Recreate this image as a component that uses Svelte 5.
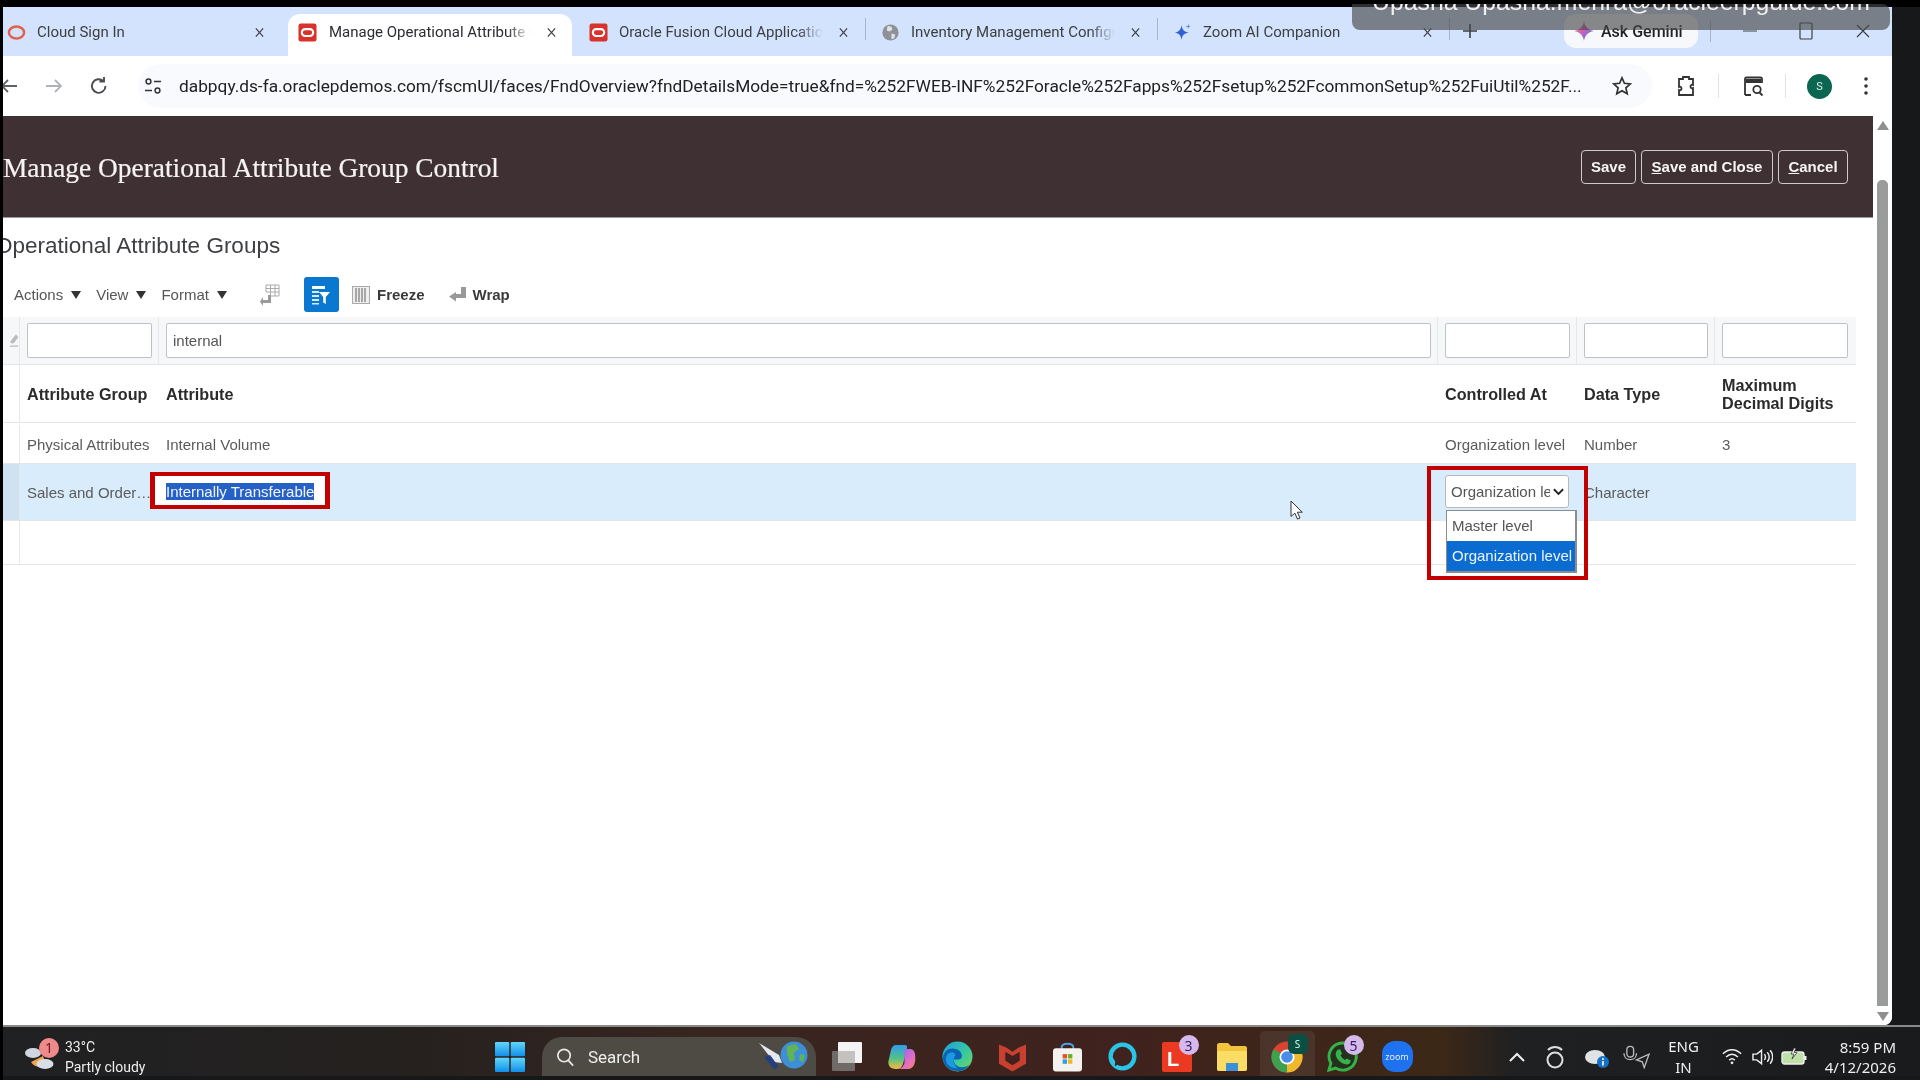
<script>
	const url = 'dabpqy.ds-fa.oraclepdemos.com/fscmUI/faces/FndOverview?fndDetailsMode=true&fnd=%252FWEB-INF%252Foracle%252Fapps%252Fsetup%252FcommonSetup%252FuiUtil%252F...';

	const tabs = [
		{ title: 'Cloud Sign In', icon: 'ring' },
		{ title: 'Manage Operational Attribute Group Control', icon: 'oracle', active: true },
		{ title: 'Oracle Fusion Cloud Applications', icon: 'oracle', sep: true },
		{ title: 'Inventory Management Configuration', icon: 'globe', sep: true },
		{ title: 'Zoom AI Companion', icon: 'spark', sep: true }
	];

	const menus = ['Actions', 'View', 'Format'];
	const filters = ['', 'internal', '', '', ''];
</script>

<div class="screen">
	<div class="top-strip"></div>

	<div class="window">
		<header class="tabbar">
			<div class="tabs">
				{#each tabs as tab}
					<div class="tab" class:active={tab.active} class:sep={tab.sep}>
						{#if tab.icon === 'ring'}
							<svg class="fav" viewBox="0 0 20 20"><ellipse cx="10" cy="10" rx="8" ry="6.4" fill="none" stroke="#e2604f" stroke-width="2.6" /></svg>
						{:else if tab.icon === 'oracle'}
							<svg class="fav" viewBox="0 0 20 20"><rect x="0.5" y="0.5" width="19" height="19" rx="2.5" fill="#d8322a" /><rect x="4" y="6.4" width="12" height="7.2" rx="3.6" fill="none" stroke="#fff" stroke-width="2.2" /></svg>
						{:else if tab.icon === 'globe'}
							<svg class="fav" viewBox="0 0 20 20"><circle cx="10" cy="10" r="8.5" fill="#8d9198" /><path d="M7 3l4 1 1 3-3 2-3-1zM11 11l4 1-1 4-3 1z" fill="#dfe3e8" /></svg>
						{:else}
							<svg class="fav" viewBox="0 0 20 20"><path d="M9 2c.7 5 2.500 7 7.500 8-5 1-6.800 3-7.500 8-.7-5-2.500-7-7-8 4.500-1 6.300-3 7-8z" fill="#2f62d8" /><path d="M16 1l.6 2 1.900.6-1.900.6L16 6l-.6-1.800-1.900-.6 1.900-.6z" fill="#4f86ee" /></svg>
						{/if}
						<span class="tab-title">{tab.title}</span>
						<svg class="tab-close" viewBox="0 0 12 12"><path d="M2 1.500l8 9M10 1.500l-8 9" stroke="#3c4043" stroke-width="1.300" fill="none" /></svg>
					</div>
				{/each}
			</div>
			<svg class="plus" viewBox="0 0 14 14"><path d="M7 0v14M0 7h14" stroke="#3c4043" stroke-width="1.600" /></svg>
			<div class="gemini">
				<svg viewBox="0 0 20 20" width="22" height="22"><defs><linearGradient id="gem" x1="0" y1="0" x2="1" y2="1"><stop offset="0" stop-color="#f0a030" /><stop offset=".45" stop-color="#d060b8" /><stop offset="1" stop-color="#2f7cf0" /></linearGradient></defs><path d="M10 1c.8 5 3.500 8 9 9-5.500 1-8.200 4-9 9-.8-5-3.500-8-9-9 5.500-1 8.200-4 9-9z" fill="url(#gem)" /></svg>
				Ask Gemini
			</div>
			<i class="win-sep"></i>
			<svg class="win-btn min" viewBox="0 0 14 14"><path d="M0 7h14" stroke="#3c4043" stroke-width="1.200" /></svg>
			<svg class="win-btn max" viewBox="0 0 14 18"><rect x="1" y="1" width="12" height="16" rx="1" fill="none" stroke="#3c4043" stroke-width="1.200" /></svg>
			<svg class="win-btn cls" viewBox="0 0 14 14"><path d="M1 1l12 12M13 1L1 13" stroke="#3c4043" stroke-width="1.200" fill="none" /></svg>
		</header>

		<nav class="toolbar">
			<svg class="tool back" viewBox="0 0 24 24"><path d="M20 12H5M11 6l-6 6 6 6" stroke="#5f6368" stroke-width="1.800" fill="none" /></svg>
			<svg class="tool forward" viewBox="0 0 24 24"><path d="M4 12h15M13 6l6 6-6 6" stroke="#b0b4b9" stroke-width="1.800" fill="none" /></svg>
			<svg class="tool reload" viewBox="0 0 24 24"><path d="M18.500 12a6.800 6.800 0 1 1-2.200-5M17 3v4.500h-4.500" stroke="#4a4d52" stroke-width="1.900" fill="none" /></svg>
			<div class="omnibox">
				<svg class="tune" viewBox="0 0 18 18"><circle cx="4.500" cy="4.500" r="2.400" fill="none" stroke="#333" stroke-width="1.500" /><path d="M10 4.500h7M1 13.500h7" stroke="#333" stroke-width="1.700" /><circle cx="13.500" cy="13.500" r="2.400" fill="none" stroke="#333" stroke-width="1.500" /></svg>
				<span class="url">{url}</span>
				<svg class="star" viewBox="0 0 20 20"><path d="M10 1.800l2.400 5.500 6 .6-4.500 4 1.300 5.900L10 14.700l-5.200 3.100 1.300-5.900-4.500-4 6-.6z" fill="none" stroke="#333" stroke-width="1.700" /></svg>
			</div>
			<svg class="tool ext" viewBox="0 0 24 24"><path d="M5 5h4V3h6v2h4v6c-1.500-.6-2.500 0-2.500 1.500S17.500 14.600 19 14v7H5v-5c1.500.6 2.500 0 2.500-1.500S6.500 12.400 5 13z" fill="none" stroke="#333" stroke-width="1.800" /></svg>
			<i class="tool-sep first"></i>
			<svg class="tool search" viewBox="0 0 24 24"><path d="M4 21V5c0-1 .6-1.500 1.500-1.500h14c.9 0 1.500.5 1.500 1.500v4M4 21h6" fill="none" stroke="#333" stroke-width="1.800" /><rect x="5" y="5" width="15" height="4" fill="#333" /><circle cx="16" cy="15.500" r="3.700" fill="none" stroke="#333" stroke-width="1.800" /><path d="M18.500 18.500l3 3" stroke="#333" stroke-width="1.800" /></svg>
			<i class="tool-sep"></i>
			<span class="avatar">S</span>
			<svg class="kebab" viewBox="0 0 6 20"><circle cx="3" cy="3" r="1.800" fill="#333" /><circle cx="3" cy="10" r="1.800" fill="#333" /><circle cx="3" cy="17" r="1.800" fill="#333" /></svg>
		</nav>

		<div class="page">
			<main class="main">
				<section class="title-bar">
					<h1>Manage Operational Attribute Group Control</h1>
					<div class="actions">
						<button type="button">Save</button>
						<button type="button"><u>S</u>ave and Close</button>
						<button type="button"><u>C</u>ancel</button>
					</div>
				</section>

				<h2>Operational Attribute Groups</h2>

				<div class="table-tools">
					{#each menus as menu}
						<span class="menu">{menu}<i class="caret"></i></span>
					{/each}
					<svg class="detach" viewBox="0 0 20 22"><path d="M6 1h13v11H11" fill="#fff" stroke="#aaa" stroke-width="1" /><path d="M6 1v7M10.500 1v11M15 1v11M6 4.500h13M6 8h13" stroke="#aaa" stroke-width="1" fill="none" /><path d="M8 11v5H3v-3l-3 4.500L3 22v-3h8v-8z" fill="#9a9a9a" /></svg>
					<span class="qbe">
						<svg viewBox="0 0 20 20" width="20" height="20"><rect x="1" y="1" width="13" height="3" fill="#fff" /><path d="M1 6h7v2H1zM1 10h7v2H1zM1 14h7v2H1zM1 18h7v1.500H1z" fill="#d5e9f8" /><path d="M8 7h11l-4.200 5v7l-2.600-1.500V12z" fill="#fff" /></svg>
					</span>
					<svg class="freeze" viewBox="0 0 18 18"><rect x="0.500" y="0.500" width="17" height="17" fill="#eee" stroke="#aaa" /><path d="M4 2v14M7 2v14M10 2v14M13 2v14" stroke="#777" stroke-width="1.200" /></svg>
					<span class="tool-label">Freeze</span>
					<svg class="wrap" viewBox="0 0 17 16"><path d="M12 0h5v11H7v3.500L0 9.500 7 5v2h5z" fill="#999" /></svg>
					<span class="tool-label">Wrap</span>
				</div>

				<div class="table">
					<div class="row filter-row">
						<div class="cell lead">
							<svg viewBox="0 0 12 18" width="11" height="16"><path d="M8 0l3 4-6 8H1l-.5-2.500z" fill="#bbb" /><path d="M0 15h11v1.500H0z" fill="#bbb" /></svg>
						</div>
						{#each filters as value}
							<div class="cell"><input type="text" {value} readonly /></div>
						{/each}
					</div>

					<div class="row head-row">
						<div class="cell lead"></div>
						<div class="cell">Attribute Group</div>
						<div class="cell">Attribute</div>
						<div class="cell">Controlled At</div>
						<div class="cell">Data Type</div>
						<div class="cell">Maximum<br />Decimal Digits</div>
					</div>

					<div class="row data-row plain">
						<div class="cell lead"></div>
						<div class="cell">Physical Attributes</div>
						<div class="cell">Internal Volume</div>
						<div class="cell">Organization level</div>
						<div class="cell">Number</div>
						<div class="cell">3</div>
					</div>

					<div class="row data-row selected">
						<div class="cell lead"></div>
						<div class="cell">Sales and Order…</div>
						<div class="cell"><span class="mark"><span class="picked">Internally Transferable</span></span></div>
						<div class="cell control">
							<div class="select">
								<span class="select-value">Organization level</span>
								<svg viewBox="0 0 12 8" width="11" height="8"><path d="M1 1l5 5 5-5" fill="none" stroke="#222" stroke-width="2" /></svg>
							</div>
							<div class="listbox">
								<div class="option">Master level</div>
								<div class="option on">Organization level</div>
							</div>
							<div class="callout"></div>
						</div>
						<div class="cell">Character</div>
						<div class="cell"></div>
					</div>

					<div class="row empty-row">
						<div class="cell lead"></div>
					</div>
				</div>

				<svg class="pointer" viewBox="0 0 14 20" width="14" height="20"><path d="M1 1v15.500l3.800-3.400 2.700 6 2.500-1.100-2.700-5.800h5z" fill="#fff" stroke="#333" stroke-width="1" /></svg>
			</main>

			<aside class="scrollbar">
				<i class="arrow up"></i>
				<i class="thumb"></i>
				<i class="arrow down"></i>
			</aside>
		</div>
	</div>

	<div class="share-pill"><span>Upasna Upasna.mehra@oracleerpguide.com</span></div>

	<footer class="taskbar">
		<div class="weather">
			<div class="weather-icon">
				<svg viewBox="0 0 31 28" width="31" height="28"><ellipse cx="8" cy="10" rx="8" ry="5" fill="#cfd6df" /><path d="M6 19c4 6 11 6 15 2l-3-8z" fill="#f0a54a" /><ellipse cx="20" cy="21" rx="8.500" ry="5" fill="#d7dee6" /></svg>
				<b class="count red">1</b>
			</div>
			<div class="weather-text">
				<span>33°C</span>
				<span>Partly cloudy</span>
			</div>
		</div>

		<svg class="start" viewBox="0 0 30 30" width="30" height="30">
			<defs><linearGradient id="win" x1="0" y1="0" x2="0" y2="1"><stop offset="0" stop-color="#62d6fb" /><stop offset="1" stop-color="#0f8fe8" /></linearGradient></defs>
			<rect x="0" y="0" width="14.300" height="14.300" rx="1" fill="url(#win)" />
			<rect x="15.700" y="0" width="14.300" height="14.300" rx="1" fill="url(#win)" />
			<rect x="0" y="15.700" width="14.300" height="14.300" rx="1" fill="url(#win)" />
			<rect x="15.700" y="15.700" width="14.300" height="14.300" rx="1" fill="url(#win)" />
		</svg>

		<div class="searchbox">
			<svg viewBox="0 0 20 20" width="19" height="20"><circle cx="8.500" cy="8.500" r="6.500" fill="none" stroke="#e8e8e8" stroke-width="1.800" /><path d="M13 13.500l5 5.500" stroke="#e8e8e8" stroke-width="1.800" /></svg>
			<span>Search</span>
			<svg class="rocket" viewBox="0 0 50 38" width="50" height="38">
				<path d="M1 5l20 12 3 8-8-1z" fill="#e3e7ee" />
				<path d="M6 19l10 12 5-2-9-12z" fill="#24407c" />
				<circle cx="36" cy="17" r="13.500" fill="#3d8fd8" />
				<path d="M29 8l9-2 3 5-5 4 1 7-5 2-3-8zM42 16l5 1-2 7-4-2z" fill="#62b354" />
			</svg>
		</div>

		<div class="apps">
			<span class="app">
				<svg viewBox="0 0 30 30" width="30" height="30"><rect x="0" y="9" width="23" height="20" rx="1" fill="#6f6b69" /><rect x="6" y="0" width="24" height="21" rx="1" fill="#f4f4f4" /><rect x="6" y="9" width="17" height="12" fill="#c4c2c0" /></svg>
			</span>
			<span class="app">
				<svg viewBox="0 0 30 30" width="30" height="30">
					<defs>
						<linearGradient id="copa" x1="0" y1="0" x2="0" y2="1"><stop offset="0" stop-color="#2f9df0" /><stop offset=".55" stop-color="#53c08a" /><stop offset="1" stop-color="#f6bb3a" /></linearGradient>
						<linearGradient id="copb" x1="0" y1="0" x2="1" y2="1"><stop offset="0" stop-color="#7c6cf0" /><stop offset=".6" stop-color="#e46cc8" /><stop offset="1" stop-color="#f58a5a" /></linearGradient>
					</defs>
					<path d="M9 3h9c2 0 2.500 2 1.800 4L16 22c-1 3-3 5-6 5-1 0-2.500 0-4-.5C3 26 .8 23 1.500 19L4 8c.6-3 2.500-5 5-5z" fill="url(#copa)" />
					<path d="M17 7h6c3 0 4.500 2 5 5 .5 4 .5 8-1 11-1 2-3 4-6 4h-9c3-1 4.500-3 5.500-6z" fill="url(#copb)" />
				</svg>
			</span>
			<span class="app">
				<svg viewBox="0 0 32 32" width="31" height="31"><defs><linearGradient id="edge" x1="0" y1="0" x2="1" y2="1"><stop offset="0" stop-color="#1e9fe0" /><stop offset=".55" stop-color="#36c8a0" /><stop offset="1" stop-color="#7ad65a" /></linearGradient></defs><circle cx="16" cy="16" r="15.500" fill="url(#edge)" /><path d="M1 17C2 9 9 6 15 8.500c5 2 6.500 6.500 5 9-1.500 2-6 2-8 1-.5 4 3 8 8 8.500 3 .3 6-.6 8-2.500-3 5-8 7-13 6.500C7 30 .5 24 1 17z" fill="#0c62b4" /><path d="M4 19c0-5 4-8.500 8-7 2.500 1 2 3 .5 5-1.500 2.500-.5 8 4 11-6 .5-12.500-3-12.500-9z" fill="#1b9ae0" /></svg>
			</span>
			<span class="app">
				<svg viewBox="0 0 28 30" width="27" height="30"><path d="M0 2l8 3.500 6 4 6-4L28 2v20l-14 8L0 22z" fill="#c8402f" /><path d="M6.500 9.500L14 14l7.500-4.500V19L14 23.500 6.500 19z" fill="#43201d" /></svg>
			</span>
			<span class="app">
				<svg viewBox="0 0 30 30" width="29" height="30"><path d="M9 8V5c0-5 12-5 12 0v3" fill="none" stroke="#4aa0e0" stroke-width="2" /><rect x="0" y="6" width="30" height="24" rx="3" fill="#f4f2ee" /><rect x="10" y="12" width="4.500" height="4.500" fill="#e2502c" /><rect x="15.500" y="12" width="4.500" height="4.500" fill="#6aae2c" /><rect x="10" y="17.500" width="4.500" height="4.500" fill="#2a9ee0" /><rect x="15.500" y="17.500" width="4.500" height="4.500" fill="#f0b820" /></svg>
			</span>
			<span class="app">
				<svg viewBox="0 0 32 32" width="31" height="31"><path d="M16 1.500a14.500 14.500 0 1 0 0 29 14.500 14.500 0 0 0 0-29zm0 4.500a10 10 0 0 1 0 20c-2 0-3.500-.5-5-1.500L8 26l.5-5c-1-1.500-2.500-3-2.500-5a10 10 0 0 1 10-10z" fill="#29c4e6" fill-rule="evenodd" /></svg>
			</span>
			<span class="app">
				<span class="l-tile">L</span>
				<b class="count lilac">3</b>
			</span>
			<span class="app">
				<svg viewBox="0 0 30 28" width="30" height="28"><path d="M0 2c0-1 1-2 2-2h9l3 3h14c1 0 2 1 2 2v21c0 1-1 2-2 2H2c-1 0-2-1-2-2z" fill="#f1c43c" /><path d="M0 8h30v18c0 1-1 2-2 2H2c-1 0-2-1-2-2z" fill="#fbdc65" /><rect x="9" y="20" width="12" height="8" fill="#3d8fd8" /></svg>
			</span>
			<span class="app current">
				<svg viewBox="0 0 32 32" width="32" height="32"><circle cx="16" cy="16" r="15.500" fill="#d9432f" /><path d="M16 16L29.400 8.200A15.500 15.500 0 0 1 16 31.500z" fill="#f0b92c" /><path d="M16 16L16 31.500A15.500 15.500 0 0 1 2.600 8.200z" fill="#3da14f" /><circle cx="16" cy="16" r="7.500" fill="#fff" /><circle cx="16" cy="16" r="5.800" fill="#4a8de8" /></svg>
				<b class="count teal">S</b>
			</span>
			<span class="app">
				<svg viewBox="0 0 32 32" width="31" height="31"><path d="M16 2a14 14 0 0 0-12 21L2 30l7-2a14 14 0 1 0 7-26z" fill="#26301f" stroke="#35b34a" stroke-width="3" /><path d="M11 9l2.500-.5 2 4.500-1.500 2c1 2 2.500 3.500 4.500 4.500l2-1.500 4 2-.5 2.500c-1 1.500-3 2-5 1.500-5-1-9-5-10-9.500-.3-2 .8-4.500 2-5.500z" fill="#35b34a" /></svg>
				<b class="count lilac wa">5</b>
			</span>
			<span class="app">
				<span class="zoom-tile">zoom</span>
			</span>
		</div>

		<div class="tray">
			<svg class="tray-caret" viewBox="0 0 16 10" width="16" height="10"><path d="M1 9l7-7 7 7" fill="none" stroke="#eee" stroke-width="2" /></svg>
			<svg class="tray-ring" viewBox="0 0 18 24" width="18" height="24"><circle cx="9" cy="15" r="7.500" fill="none" stroke="#ddd" stroke-width="2" /><path d="M2 5c4-4 10-4 14 0" fill="none" stroke="#ddd" stroke-width="2" /></svg>
			<svg class="tray-cloud" viewBox="0 0 24 22" width="24" height="22"><ellipse cx="10" cy="11" rx="10" ry="7" fill="#dfe3e6" /><circle cx="18" cy="16" r="6" fill="#1670c8" /><rect x="17.200" y="15" width="1.600" height="4.500" fill="#fff" /><circle cx="18" cy="13" r="1" fill="#fff" /></svg>
			<svg class="tray-mic" viewBox="0 0 28 24" width="27" height="24"><rect x="4" y="1" width="7" height="11" rx="3.500" fill="none" stroke="#bbb" stroke-width="1.400" /><path d="M1 8c0 9 13 9 13 0M14 15l13-6-5 14-2-6z" fill="none" stroke="#bbb" stroke-width="1.400" /></svg>
			<div class="lang"><span>ENG</span><span>IN</span></div>
			<svg class="tray-wifi" viewBox="0 0 22 18" width="20" height="17"><path d="M1 6c6-6 14-6 20 0M4.500 9.500c4-4 9-4 13 0M8 13c2-2 4-2 6 0" fill="none" stroke="#eee" stroke-width="1.700" /><circle cx="11" cy="16" r="1.500" fill="#eee" /></svg>
			<svg class="tray-vol" viewBox="0 0 22 18" width="21" height="18"><path d="M1 6h4l5-4v14l-5-4H1z" fill="none" stroke="#eee" stroke-width="1.500" /><path d="M13 6c1.500 2 1.500 4 0 6M16 4c2.500 3 2.500 7 0 10M19 2c3.500 4 3.500 10 0 14" fill="none" stroke="#eee" stroke-width="1.500" /></svg>
			<svg class="tray-batt" viewBox="0 0 26 18" width="26" height="18"><rect x="1" y="4" width="22" height="12" rx="2.500" fill="#bfe0a8" stroke="#eee" stroke-width="1.400" /><rect x="23" y="8" width="2.500" height="4" fill="#eee" /><path d="M13 0l-3 6h3l-2 5 5-6.500h-3l2-4.500z" fill="#fff" stroke="#222" stroke-width=".7" /></svg>
			<div class="clock"><span>8:59 PM</span><span>4/12/2026</span></div>
		</div>
	</footer>
</div>

<style>
	:global(body) {
		margin: 0;
		background: #000;
	}
	.screen {
		position: relative;
		display: flex;
		flex-direction: column;
		width: 1920px;
		height: 1080px;
		overflow: hidden;
		background: #17181a;
		font-family: 'Liberation Sans', Arial, sans-serif;
		filter: blur(0.35px);
	}
	.screen::before {
		content: '';
		position: absolute;
		inset: 0 auto 0 0;
		width: 3px;
		background: #000;
		z-index: 5;
	}
	.top-strip {
		height: 7px;
		background: #000;
		flex: none;
	}

	/* ---- browser ---- */
	.window {
		position: relative;
		display: flex;
		flex-direction: column;
		flex: none;
		width: 1889px;
		height: 1018px;
		margin-left: 3px;
		background: #fff;
		border-radius: 0 0 8px 0;
		overflow: hidden;
	}
	.tabbar {
		display: flex;
		align-items: flex-end;
		height: 49px;
		flex: none;
		background: #d3e3fd;
		font-family: Roboto, 'Noto Sans', sans-serif;
		color: #3c4043;
	}
	.tabs {
		display: flex;
		gap: 8px;
		margin-left: -7px;
	}
	.tab {
		position: relative;
		display: flex;
		align-items: center;
		width: 284px;
		height: 42px;
		box-sizing: border-box;
		padding: 0 15px 6px 11px;
		border-radius: 12px 12px 0 0;
		font-size: 15px;
	}
	.tab.active {
		background: #fff;
		color: #2a2c30;
		padding-left: 10px;
	}
	.tab.active .tab-title {
		margin-left: 12px;
	}
	.tab.sep {
		padding-left: 9px;
	}
	.tab.sep::after {
		content: '';
		position: absolute;
		right: -2px;
		top: 4px;
		width: 1px;
		height: 22px;
		background: #a8b4c8;
	}
	.fav {
		width: 19px;
		height: 19px;
		flex: none;
	}
	.tab-title {
		flex: 1;
		margin: 0 15px 0 11px;
		white-space: nowrap;
		overflow: hidden;
		-webkit-mask-image: linear-gradient(90deg, #000 88%, transparent);
		mask-image: linear-gradient(90deg, #000 88%, transparent);
	}
	.tab-close {
		width: 11px;
		height: 11px;
		flex: none;
	}
	.plus {
		width: 14px;
		height: 14px;
		margin: 0 0 18px 15px;
		flex: none;
	}
	.gemini {
		display: flex;
		align-items: center;
		gap: 6px;
		width: 134px;
		height: 34px;
		box-sizing: border-box;
		margin: 0 0 8px 87px;
		padding-left: 9px;
		border-radius: 12px;
		background: #f6f8fc;
		font-size: 16px;
		font-weight: 500;
		color: #202124;
		flex: none;
	}
	.win-sep {
		width: 1px;
		height: 22px;
		margin: 0 0 14px 12px;
		background: #a8b4c8;
		flex: none;
	}
	.win-btn {
		flex: none;
		width: 14px;
	}
	.min {
		height: 14px;
		margin: 0 0 18px 32px;
	}
	.max {
		height: 18px;
		margin: 0 0 16px 42px;
	}
	.cls {
		height: 14px;
		margin: 0 0 18px 43px;
	}
	.toolbar {
		display: flex;
		align-items: center;
		height: 60px;
		flex: none;
		background: #fff;
		font-family: Roboto, 'Noto Sans', sans-serif;
	}
	.tool {
		width: 24px;
		height: 24px;
		flex: none;
	}
	.back {
		margin-left: -6px;
	}
	.forward {
		margin-left: 21px;
	}
	.reload {
		margin-left: 21px;
	}
	.omnibox {
		display: flex;
		align-items: center;
		width: 1514px;
		height: 44px;
		box-sizing: border-box;
		margin-left: 27px;
		padding: 0 20px 0 6px;
		border-radius: 22px;
		background: #f8fafd;
		flex: none;
	}
	.tune {
		width: 18px;
		height: 18px;
		flex: none;
	}
	.url {
		margin-left: 17px;
		font-size: 17.3px;
		color: #202124;
		white-space: nowrap;
		overflow: hidden;
		flex: 1;
	}
	.star {
		width: 20px;
		height: 20px;
		flex: none;
		margin-left: 24px;
	}
	.ext {
		margin-left: 22px;
	}
	.tool-sep {
		width: 1px;
		height: 24px;
		background: #dfe1e5;
		margin: 0 21px 0 20px;
		flex: none;
	}
	.tool-sep.first {
		margin-right: 22px;
	}
	.avatar {
		display: flex;
		align-items: center;
		justify-content: center;
		width: 25px;
		height: 25px;
		border-radius: 50%;
		background: #0b6651;
		color: #d8efe6;
		font-size: 11px;
		flex: none;
	}
	.kebab {
		width: 6px;
		height: 20px;
		margin-left: 31px;
		flex: none;
	}

	/* ---- page ---- */
	.page {
		display: flex;
		flex: 1;
		min-height: 0;
	}
	.main {
		position: relative;
		width: 1870px;
		overflow: hidden;
		background: #fff;
		flex: none;
	}
	.title-bar {
		display: flex;
		align-items: center;
		justify-content: space-between;
		height: 102px;
		box-sizing: border-box;
		padding: 0 25px 0 0;
		border-bottom: 1px solid #999;
		background: #3f3033;
	}
	h1 {
		margin: 0;
		padding-top: 3px;
		font-family: 'Liberation Serif', serif;
		font-size: 27.4px;
		font-weight: 400;
		color: #f6f3f2;
		-webkit-text-stroke: 0.2px #f6f3f2;
	}
	.actions {
		display: flex;
		gap: 5px;
	}
	.actions button {
		height: 34px;
		padding: 0;
		border: 1px solid #cfc9c9;
		border-radius: 4px;
		background: transparent;
		color: #f6f4f4;
		font-family: 'Liberation Sans', Arial, sans-serif;
		font-size: 15px;
		font-weight: 700;
		white-space: nowrap;
	}
	.actions button:nth-child(1) {
		width: 55px;
	}
	.actions button:nth-child(2) {
		width: 132px;
	}
	.actions button:nth-child(3) {
		width: 70px;
	}
	h2 {
		margin: 14px 0 0 -8px;
		font-size: 22.5px;
		line-height: 28px;
		font-weight: 400;
		color: #3d3f42;
	}
	.table-tools {
		display: flex;
		align-items: center;
		height: 35px;
		margin: 17px 0 5px 11px;
		font-size: 15px;
		color: #555;
	}
	.menu {
		display: flex;
		align-items: center;
		margin-right: 15px;
	}
	.caret {
		width: 0;
		height: 0;
		margin-left: 8px;
		border-left: 5.500px solid transparent;
		border-right: 5.500px solid transparent;
		border-top: 8px solid #333;
	}
	.detach {
		width: 20px;
		height: 22px;
		margin-left: 18px;
		flex: none;
	}
	.qbe {
		display: flex;
		align-items: center;
		justify-content: center;
		width: 35px;
		height: 35px;
		margin-left: 24px;
		border-radius: 3px;
		background: #0a78d0;
		flex: none;
	}
	.freeze {
		width: 18px;
		height: 18px;
		margin-left: 13px;
		flex: none;
	}
	.wrap {
		width: 17px;
		height: 16px;
		margin-left: 24px;
		flex: none;
	}
	.tool-label {
		margin-left: 7px;
		font-weight: 700;
		color: #3a3a3a;
	}
	.table {
		width: 1853px;
	}
	.row {
		display: grid;
		grid-template-columns: 17px 139px 1279px 139px 138px 141px;
		align-items: center;
		border-bottom: 1px solid #e3e6e8;
		box-sizing: border-box;
	}
	.cell {
		padding: 0 6px 0 7px;
		white-space: nowrap;
		box-sizing: border-box;
	}
	.lead {
		padding: 0;
		align-self: stretch;
		border-right: 1px solid #e6e9eb;
	}
	.filter-row {
		height: 48px;
		background: #f5f7f8;
		align-items: stretch;
	}
	.filter-row .cell {
		display: flex;
		align-items: flex-start;
		padding-top: 6px;
		border-right: 1px solid #e6e9eb;
	}
	.filter-row .cell:last-child {
		border-right: 0;
		padding-right: 8px;
	}
	.filter-row .lead {
		padding: 16px 0 0 7px;
	}
	input {
		width: 100%;
		height: 35px;
		box-sizing: border-box;
		padding: 0 6px;
		border: 1px solid #bfc3c6;
		border-radius: 2px;
		background: #fff;
		font-family: 'Liberation Sans', Arial, sans-serif;
		font-size: 15px;
		color: #555;
		outline: 0;
	}
	.head-row {
		height: 58px;
		font-size: 16.2px;
		line-height: 18px;
		font-weight: 700;
		color: #2b2b2b;
	}
	.data-row {
		height: 41px;
		font-size: 15px;
		color: #5b5b5b;
	}
	.plain {
		padding-top: 2px;
	}
	.selected {
		height: 57px;
		background: #d8ecfb;
	}
	.selected .lead {
		background: #cfe2f1;
	}
	.empty-row {
		height: 44px;
	}
	.mark {
		display: flex;
		align-items: center;
		width: 180px;
		height: 37px;
		box-sizing: border-box;
		margin: -4px 0 0 -16px;
		padding: 2px 0 0 11px;
		border: solid #c20000;
		border-width: 4px 5px;
		background: #fff;
	}
	.picked {
		background: #2560c6;
		color: #f2f6ff;
	}
	.control {
		position: relative;
		display: flex;
		align-items: center;
		align-self: stretch;
	}
	.select {
		display: flex;
		align-items: center;
		justify-content: space-between;
		width: 124px;
		height: 33px;
		box-sizing: border-box;
		margin-top: -1px;
		padding: 0 4px 0 5px;
		border: 1px solid #b5b9bc;
		border-radius: 3px;
		background: #fff;
		color: #555;
	}
	.select-value {
		width: 99px;
		overflow: hidden;
	}
	.listbox {
		position: absolute;
		left: 8px;
		top: 46px;
		width: 131px;
		box-sizing: border-box;
		border: 1px solid #8c8c8c;
		border-right-width: 2px;
		border-bottom-width: 2px;
		background: #fff;
		z-index: 2;
	}
	.option {
		height: 30px;
		line-height: 30px;
		padding-left: 5px;
		color: #555;
	}
	.option.on {
		background: #0a6bd0;
		color: #eaf4ff;
	}
	.callout {
		position: absolute;
		left: -11px;
		top: 2px;
		width: 161px;
		height: 114px;
		box-sizing: border-box;
		border: 4px solid #c20000;
		z-index: 3;
	}
	.pointer {
		position: absolute;
		left: 1287px;
		top: 384px;
	}
	.scrollbar {
		position: relative;
		width: 19px;
		flex: none;
		background: #fff;
	}
	.thumb {
		position: absolute;
		left: 4px;
		top: 64px;
		width: 11px;
		height: 826px;
		border-radius: 5px 5px 0 0;
		background: #9a9c9c;
	}
	.arrow {
		position: absolute;
		left: 4px;
		width: 0;
		height: 0;
		border-left: 6px solid transparent;
		border-right: 6px solid transparent;
	}
	.arrow.up {
		top: 5px;
		border-bottom: 9px solid #8e9090;
	}
	.arrow.down {
		bottom: 4px;
		border-top: 9px solid #8e9090;
	}
	.share-pill {
		position: absolute;
		left: 1352px;
		top: 4px;
		width: 538px;
		height: 26px;
		overflow: hidden;
		border-radius: 0 8px 8px 8px;
		background: rgba(70, 70, 72, 0.64);
		text-align: center;
		z-index: 4;
	}
	.share-pill span {
		display: block;
		margin-top: -15px;
		font-size: 24.8px;
		line-height: 25px;
		color: #f0f0f0;
		white-space: nowrap;
	}

	/* ---- taskbar ---- */
	.taskbar {
		position: relative;
		display: flex;
		align-items: center;
		height: 51px;
		flex: none;
		box-sizing: border-box;
		margin-left: 3px;
		padding-top: 10px;
		border-top: 2px solid #8a8a88;
		background: linear-gradient(90deg, #202123 0, #25211f 21%, #38251f 37%, #40221e 58%, #3c2817 75%, #1f2022 79%, #1a1b1d 100%);
		font-family: 'Noto Sans', Roboto, sans-serif;
		color: #eee;
	}
	.weather {
		display: flex;
		align-items: center;
		width: 470px;
		margin-left: 22px;
		flex: none;
	}
	.weather-icon {
		position: relative;
		width: 31px;
		height: 28px;
	}
	.weather-text {
		display: flex;
		flex-direction: column;
		margin-left: 9px;
		font-size: 14px;
		line-height: 20px;
		font-family: Roboto, sans-serif;
	}
	.count {
		position: absolute;
		display: flex;
		align-items: center;
		justify-content: center;
		width: 20px;
		height: 20px;
		border-radius: 50%;
		font-size: 14px;
		font-weight: 400;
		color: #3a2060;
	}
	.count.red {
		left: 14px;
		top: -5px;
		background: #f08a8a;
		color: #6a1a1a;
	}
	.count.lilac {
		right: 6px;
		top: -2px;
		background: #d6b9ec;
	}
	.count.wa {
		right: 6px;
	}
	.count.teal {
		right: 7px;
		top: 3px;
		border-radius: 6px;
		background: #0b4f42;
		color: #cfe;
		font-size: 10px;
	}
	.start {
		flex: none;
	}
	.searchbox {
		display: flex;
		align-items: center;
		align-self: stretch;
		width: 274px;
		box-sizing: border-box;
		margin-left: 17px;
		padding: 0 8px 0 14px;
		border-radius: 20px 20px 0 0;
		background: #4e4a44;
		font-size: 17px;
		font-family: Roboto, sans-serif;
		flex: none;
	}
	.searchbox span {
		margin-left: 13px;
		flex: 1;
	}
	.rocket {
		flex: none;
	}
	.apps {
		display: flex;
		margin-left: 3.500px;
		flex: none;
	}
	.app {
		position: relative;
		display: flex;
		align-items: center;
		justify-content: center;
		width: 55px;
		height: 39px;
	}
	.app.current {
		height: 45px;
		margin-top: -6px;
		padding-top: 6px;
		box-sizing: border-box;
		background: rgba(255, 255, 255, 0.07);
		border-radius: 5px 5px 0 0;
	}
	.l-tile {
		display: flex;
		align-items: flex-end;
		justify-content: center;
		width: 30px;
		height: 30px;
		padding-right: 8px;
		box-sizing: border-box;
		background: #ec3a22;
		color: #fff;
		font-family: 'Liberation Sans', sans-serif;
		font-size: 20px;
		line-height: 26px;
		font-weight: 700;
		border-radius: 2px;
	}
	.zoom-tile {
		display: flex;
		align-items: center;
		justify-content: center;
		width: 31px;
		height: 31px;
		border-radius: 13px;
		background: #1e72f0;
		color: #e4eeff;
		font-size: 9px;
		font-weight: 400;
	}
	.tray {
		display: flex;
		align-items: center;
		flex: 1;
		padding-right: 24px;
	}
	.tray-caret {
		margin-left: 84px;
	}
	.tray-ring {
		margin-left: 21px;
	}
	.tray-cloud {
		margin-left: 21px;
	}
	.tray-mic {
		margin-left: 14px;
	}
	.lang {
		display: flex;
		flex-direction: column;
		align-items: center;
		width: 40px;
		margin-left: 14px;
		font-size: 15px;
		line-height: 21px;
	}
	.tray-wifi {
		margin-left: 18px;
	}
	.tray-vol {
		margin-left: 10px;
	}
	.tray-batt {
		margin-left: 8px;
	}
	.clock {
		display: flex;
		flex-direction: column;
		align-items: flex-end;
		margin-left: auto;
		font-size: 15px;
		line-height: 20px;
	}
</style>
